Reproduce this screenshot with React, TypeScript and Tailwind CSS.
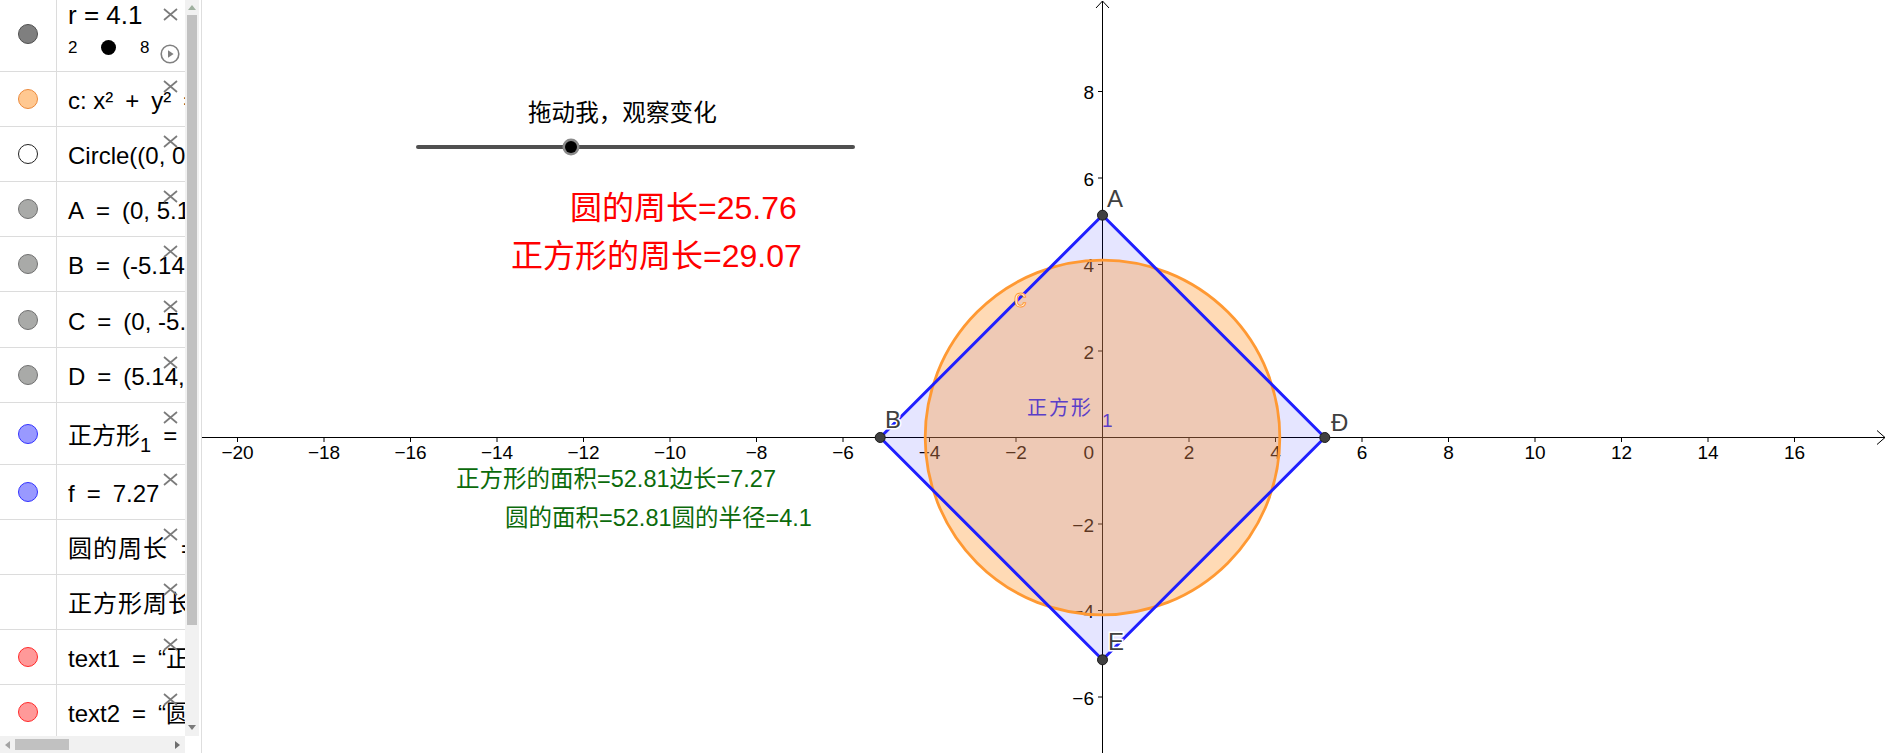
import React from "react";

const FONT = "'Liberation Sans','Noto Sans CJK SC',sans-serif";
const S = 43.25;
const OX = 1102.5;
const OY = 437.5;
const X = (v: number) => OX + v * S;
const Y = (v: number) => OY - v * S;

function CloseX() {
  return (
    <svg className="absolute right-[7px] top-[8px]" width="15" height="13" viewBox="0 0 15 13">
      <path d="M1 1L14 12M14 1L1 12" stroke="#7b7b7b" strokeWidth="1.7" fill="none" />
    </svg>
  );
}

const eq = "\u2002=\u2002";

type Row = { h: string; dot?: string; content: React.ReactNode };

const rows: Row[] = [
  { h: "h-[55px]", dot: "bg-[#ffc891] border-[#ec8a3c]", content: <span>c: x²{"\u2002+\u2002"}y²{eq}16.81</span> },
  { h: "h-[55px]", dot: "bg-white border-[#222]", content: <span>Circle((0, 0), r)</span> },
  { h: "h-[55px]", dot: "bg-[#a9aaa8] border-[#707070]", content: <span>A{eq}(0, 5.14)</span> },
  { h: "h-[55px]", dot: "bg-[#a9aaa8] border-[#707070]", content: <span>B{eq}(-5.14, 0)</span> },
  { h: "h-[56px]", dot: "bg-[#a9aaa8] border-[#707070]", content: <span>C{eq}(0, -5.14)</span> },
  { h: "h-[55px]", dot: "bg-[#a9aaa8] border-[#707070]", content: <span>D{eq}(5.14, 0)</span> },
  {
    h: "h-[62px]",
    dot: "bg-[#9999ff] border-[#3333ff]",
    content: (
      <span>
        正方形<span className="relative top-[8px] text-[20px]">1</span>
        {eq}52.81
      </span>
    ),
  },
  { h: "h-[55px]", dot: "bg-[#9999ff] border-[#3333ff]", content: <span>f{eq}7.27</span> },
  { h: "h-[55px]", content: <span className="tracking-[1px]">圆的周长{eq}25.76</span> },
  { h: "h-[55px]", content: <span className="tracking-[1px]">正方形周长{eq}29.07</span> },
  { h: "h-[55px]", dot: "bg-[#ff9999] border-[#ff2a2a]", content: <span>text1{eq}“正方形的面积”</span> },
  { h: "h-[55px]", dot: "bg-[#ff9999] border-[#ff2a2a]", content: <span>text2{eq}“圆的面积”</span> },
];

function AlgebraRow({ row }: { row: Row }) {
  return (
    <div className={`flex shrink-0 border-b border-[#dcdcdc] ${row.h}`}>
      <div className="w-[57px] shrink-0 border-r border-[#dcdcdc] flex items-center justify-center">
        {row.dot && <span className={`w-[20px] h-[20px] rounded-full border ${row.dot}`} />}
      </div>
      <div className="relative flex-1 overflow-hidden flex items-center pl-[11px] pt-[4px] whitespace-nowrap text-[24px] text-black">
        {row.content}
        <CloseX />
      </div>
    </div>
  );
}

function SliderRow() {
  return (
    <div className="flex shrink-0 h-[72px] border-b border-[#dcdcdc]">
      <div className="w-[57px] shrink-0 border-r border-[#dcdcdc] flex items-center justify-center pb-[4px]">
        <span className="w-[20px] h-[20px] rounded-full border bg-[#7f7f7f] border-[#4f4f4f]" />
      </div>
      <div className="relative flex-1 overflow-hidden flex flex-col pl-[11px] whitespace-nowrap text-black">
        <div className="h-[37px] text-[26px] leading-[31px]">r = 4.1</div>
        <div className="flex items-start text-[17px] leading-[18px]">
          <span className="w-[10px] mt-[2px]">2</span>
          <span className="ml-[23px] w-[15px] h-[15px] rounded-full bg-black mt-[3px]" />
          <span className="ml-[24px] w-[10px] mt-[2px]">8</span>
          <svg className="ml-[10px] mt-[7px]" width="20" height="20" viewBox="0 0 20 20">
            <circle cx="10" cy="10" r="8.8" fill="none" stroke="#808080" strokeWidth="1.6" />
            <path d="M8 6.2L13.6 10L8 13.8Z" fill="#808080" />
          </svg>
        </div>
        <CloseX />
      </div>
    </div>
  );
}

function Sidebar() {
  return (
    <div className="flex flex-col w-[202px] h-[753px] shrink-0 border-r border-[#dedede] bg-white">
      <div className="flex flex-1 min-h-0">
        <div className="w-[185px] flex flex-col overflow-hidden">
          <SliderRow />
          {rows.map((r, i) => (
            <AlgebraRow key={i} row={r} />
          ))}
        </div>
        <div className="w-[14px] flex flex-col bg-[#f1f1f1]">
          <div className="h-[15px] flex items-center justify-center">
            <svg width="8" height="5" viewBox="0 0 8 5"><path d="M0 5L4 0L8 5Z" fill="#9fb09f" /></svg>
          </div>
          <div className="h-[610px] mx-[2px] bg-[#c1c1c1]" />
          <div className="flex-1" />
          <div className="h-[17px] flex items-center justify-center">
            <svg width="8" height="5" viewBox="0 0 8 5"><path d="M0 0L4 5L8 0Z" fill="#7a7a7a" /></svg>
          </div>
        </div>
        <div className="w-[2px]" />
      </div>
      <div className="flex h-[17px]">
        <div className="w-[185px] flex bg-[#f1f1f1]">
          <div className="w-[15px] flex items-center justify-center">
            <svg width="5" height="8" viewBox="0 0 5 8"><path d="M5 0L0 4L5 8Z" fill="#a3a3a3" /></svg>
          </div>
          <div className="w-[54px] my-[3px] bg-[#c1c1c1]" />
          <div className="flex-1" />
          <div className="w-[15px] flex items-center justify-center">
            <svg width="5" height="8" viewBox="0 0 5 8"><path d="M0 0L5 4L0 8Z" fill="#6e6e6e" /></svg>
          </div>
        </div>
        <div className="flex-1 bg-white" />
      </div>
    </div>
  );
}

function Graphics() {
  const xs: number[] = [];
  for (let k = -20; k <= 16; k += 2) if (k !== 0) xs.push(k);
  const ys = [8, 6, 4, 2, -2, -4, -6];
  const lab = (k: number) => (k < 0 ? "\u2212" + Math.abs(k) : String(k));
  const r = 5.14 * S;
  const A = [OX, OY - r];
  const B = [OX - r, OY];
  const C = [OX, OY + r];
  const D = [OX + r, OY];
  const pts = [A, B, C, D];
  const poly = pts.map((p) => p.join(",")).join(" ");
  const ptLabel = { fill: "#404040", stroke: "white", strokeWidth: 3, paintOrder: "stroke" as const };
  return (
    <div className="flex-1 bg-white">
      <svg width="1686" height="753" viewBox="202 0 1686 753" className="block" fontFamily={FONT}>
        {/* axes */}
        <line x1="202" y1={OY} x2="1885" y2={OY} stroke="#000" strokeWidth="1" />
        <path d={`M1877 ${OY - 7}L1885 ${OY}L1877 ${OY + 7}`} stroke="#000" fill="none" strokeWidth="1" />
        <line x1={OX} y1="1" x2={OX} y2="753" stroke="#000" strokeWidth="1" />
        <path d={`M${OX - 6.5} 8L${OX} 1L${OX + 6.5} 8`} stroke="#000" fill="none" strokeWidth="1" />
        {xs.map((k) => (
          <g key={"x" + k}>
            <line x1={X(k)} y1={OY} x2={X(k)} y2={OY + 4.5} stroke="#000" strokeWidth="1" />
            <text x={X(k)} y="459" fontSize="19" textAnchor="middle" fill="#000">
              {lab(k)}
            </text>
          </g>
        ))}
        {ys.map((k) => (
          <g key={"y" + k}>
            <line x1={OX - 4.5} y1={Y(k)} x2={OX} y2={Y(k)} stroke="#000" strokeWidth="1" />
            <text x="1094" y={Y(k) + 7.5} fontSize="19" textAnchor="end" fill="#000">
              {lab(k)}
            </text>
          </g>
        ))}
        <text x="1094" y="459" fontSize="19" textAnchor="end" fill="#000">0</text>

        {/* square fill, circle, then square outline */}
        <polygon points={poly} fill="rgba(0,0,255,0.1)" stroke="none" />
        <circle cx={OX} cy={OY} r={4.1 * S} fill="rgba(255,153,51,0.36)" stroke="#ff9933" strokeWidth="2.8" />
        <polygon points={poly} fill="none" stroke="#1f1fff" strokeWidth="3" strokeLinejoin="round" />
        {pts.map((p, i) => (
          <circle key={i} cx={p[0]} cy={p[1]} r="5" fill="#404040" stroke="#1a1a1a" strokeWidth="1" />
        ))}
        <text x="1107" y="207" fontSize="24" {...ptLabel}>A</text>
        <text x="885" y="428" fontSize="24" {...ptLabel}>B</text>
        <text x="1331" y="431" fontSize="24" {...ptLabel}>Ð</text>
        <text x="1108" y="650" fontSize="24" {...ptLabel}>E</text>
        <text x="1014" y="307" fontSize="25" fill="white" stroke="#ff9933" strokeWidth="1">c</text>
        <text x="1027" y="415" fontSize="20" letterSpacing="2" fill="#5a3ec8">正方形</text>
        <text x="1102" y="427" fontSize="19" fill="#5a3ec8">1</text>

        {/* slider */}
        <text x="528" y="121" fontSize="23.6" fill="#000">拖动我，观察变化</text>
        <line x1="418" y1="147" x2="853" y2="147" stroke="#505050" strokeWidth="4" strokeLinecap="round" />
        <circle cx="571" cy="147" r="8.5" fill="#8a8a8a" />
        <circle cx="571" cy="147" r="6" fill="#000" />

        {/* texts */}
        <text x="570" y="218.5" fontSize="32" fill="#ff0000">圆的周长=25.76</text>
        <text x="511" y="267" fontSize="32" fill="#ff0000">正方形的周长=29.07</text>
        <text x="456" y="486.5" fontSize="23.5" fill="#0b6b0b">正方形的面积=52.81边长=7.27</text>
        <text x="505" y="525.5" fontSize="23.5" fill="#0b6b0b">圆的面积=52.81圆的半径=4.1</text>
      </svg>
    </div>
  );
}

export default function App() {
  return (
    <div className="flex w-[1888px] h-[753px] overflow-hidden bg-white font-['Liberation_Sans','Noto_Sans_CJK_SC',sans-serif]">
      <Sidebar />
      <Graphics />
    </div>
  );
}
